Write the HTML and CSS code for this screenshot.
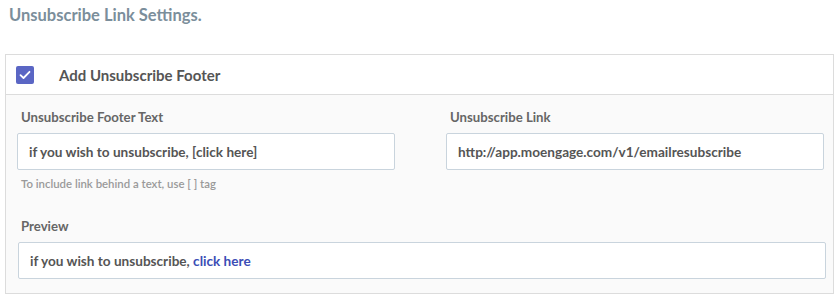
FILE: index.html
```html
<!DOCTYPE html>
<html lang="en">
<head>
    <meta charset="UTF-8">
    <title>Unsubscribe Link Settings</title>
    <link rel="stylesheet" href="styles.css">
</head>
<body>
    <div class="page">
        <h2 class="title">Unsubscribe Link Settings.</h2>

        <div class="panel">
            <div class="panel-header">
                <span class="checkbox">
                    <svg width="12" height="10" viewBox="0 0 12 10"><path d="M1.5 5.2 L4.5 8 L10.5 1.8" fill="none" stroke="#fff" stroke-width="1.8" stroke-linecap="round" stroke-linejoin="round"/></svg>
                </span>
                <span class="header-label">Add Unsubscribe Footer</span>
            </div>

            <div class="panel-body">
                <div class="fields">
                    <div class="field">
                        <label>Unsubscribe Footer Text</label>
                        <div class="input">if you wish to unsubscribe, [click here]</div>
                        <div class="hint">To include link behind a text, use [ ] tag</div>
                    </div>
                    <div class="field">
                        <label>Unsubscribe Link</label>
                        <div class="input">http://app.moengage.com/v1/emailresubscribe</div>
                    </div>
                </div>

                <div class="preview">
                    <label>Preview</label>
                    <div class="input preview-box">if you wish to unsubscribe, <a href="#">click here</a></div>
                </div>
            </div>
        </div>
    </div>
</body>
</html>
```

FILE: styles.css
```css
body {
    margin: 0;
    font-family: Lato, "Open Sans", sans-serif;
    background-color: #fff;
    color: #555;
}
.page {
    padding: 0 4px 0 5px;
}
.title {
    margin: 0;
    padding: 5px 4px 0;
    height: 54px;
    box-sizing: border-box;
    font-size: 16.5px;
    font-weight: 700;
    color: #7b8e9b;
}
.panel {
    border: 1px solid #dcdcdc;
    background-color: #fafafa;
}
.panel-header {
    display: flex;
    align-items: center;
    height: 39px;
    padding-left: 10px;
    background-color: #fff;
    border-bottom: 1px solid #dcdcdc;
}
.checkbox {
    display: flex;
    align-items: center;
    justify-content: center;
    width: 18px;
    height: 18px;
    border-radius: 2px;
    background-color: #5a66c4;
}
.header-label {
    margin-left: 25px;
    font-size: 15px;
    font-weight: 700;
    color: #555;
}
.panel-body {
    padding: 14px 8px 14px 11px;
}
.fields {
    display: grid;
    grid-template-columns: 378px 378px;
    column-gap: 51px;
}
.field label,
.preview label {
    display: block;
    margin-left: 4px;
    margin-bottom: 8px;
    font-size: 13.2px;
    font-weight: 700;
    color: #666;
}
.input {
    box-sizing: border-box;
    height: 37px;
    padding: 0 11px;
    display: flex;
    align-items: center;
    background-color: #fff;
    border: 1px solid #c9d4dd;
    border-radius: 2px;
    font-size: 13.6px;
    font-weight: 700;
    color: #555;
}
.hint {
    margin: 7px 0 0 4px;
    font-size: 11.4px;
    font-weight: 600;
    color: #999;
}
.preview {
    margin-top: 28px;
}
.preview-box {
    margin-left: 1px;
    width: 808px;
    white-space: pre;
}
.preview-box a {
    color: #3b4db5;
    text-decoration: none;
}
```
